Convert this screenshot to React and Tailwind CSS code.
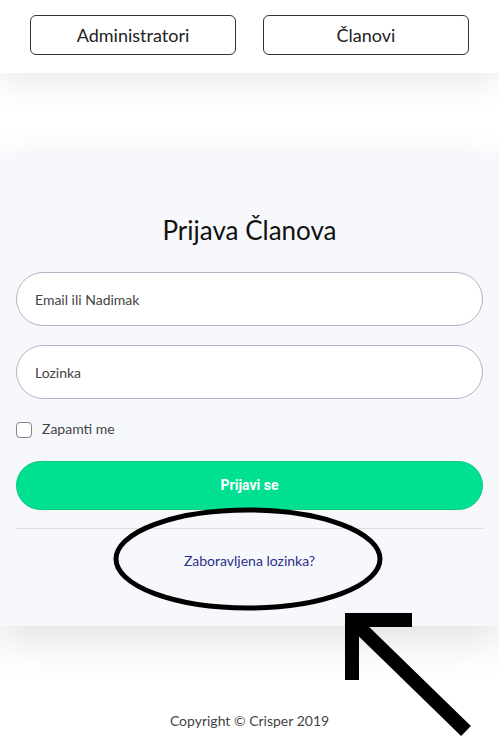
import React from "react";

// Login page with a hand-drawn annotation on top
export default function App() {
  return (
    <div className="relative min-h-[745px] w-full overflow-hidden bg-white font-['Lato',sans-serif] text-[#2b2b2b]">
      {/* Top bar */}
      <header className="relative z-10 flex h-[73px] items-start justify-center gap-[27px] bg-white pt-[15px] shadow-[0_12px_30px_rgba(0,0,0,0.08)]">
        <button className="h-[40px] w-[206px] rounded-[6px] border border-[#333] bg-white text-[18px] text-[#222]">
          Administratori
        </button>
        <button className="h-[40px] w-[206px] rounded-[6px] border border-[#333] bg-white text-[18px] text-[#222]">
          Članovi
        </button>
      </header>

      {/* Login card */}
      <main className="mt-[80px] bg-[#f7f8fc] px-4 pt-[59px] pb-[55px] shadow-[0_14px_40px_rgba(0,0,0,0.12)]">
        <h1 className="text-center text-[26px] leading-[36px] text-[#111]">Prijava Članova</h1>

        <div className="mt-[24px] flex h-[54px] items-center rounded-full border border-[#b4b4c4] bg-white px-[18px] text-[14px] text-[#444]">
          Email ili Nadimak
        </div>
        <div className="mt-[19px] flex h-[54px] items-center rounded-full border border-[#b4b4c4] bg-white px-[18px] text-[14px] text-[#444]">
          Lozinka
        </div>

        <label className="mt-[23px] flex h-[16px] items-center gap-[10px] text-[14px] leading-[16px] text-[#444]">
          <span className="h-[16px] w-[16px] rounded-[4px] border border-[#80808e] bg-white" />
          <span className="-mt-[2px]">Zapamti me</span>
        </label>

        <button className="mt-[23px] flex h-[49px] w-full items-center justify-center rounded-full border border-[#10c880] bg-[#00e091] font-['Roboto',sans-serif] text-[14px] font-bold text-white">
          Prijavi se
        </button>

        <div className="mt-[18px] h-px bg-[#dcdde3]" />

        <p className="mt-[22px] text-center text-[14px] leading-[20px] text-[#2b2f8c]">Zaboravljena lozinka?</p>
      </main>

      <footer className="mt-[85px] text-center text-[14px] leading-[20px] text-[#444]">Copyright © Crisper 2019</footer>

      {/* Annotation: ellipse and arrow */}
      <svg className="pointer-events-none absolute left-0 top-0" width="499" height="745" viewBox="0 0 499 745">
        <ellipse cx="248" cy="559" rx="132" ry="49" fill="none" stroke="#000" strokeWidth="5" />
        <rect x="345" y="613" width="67" height="14" fill="#000" />
        <rect x="345" y="613" width="14" height="67" fill="#000" />
        <line x1="352" y1="620" x2="466" y2="731" stroke="#000" strokeWidth="14" />
      </svg>
    </div>
  );
}
